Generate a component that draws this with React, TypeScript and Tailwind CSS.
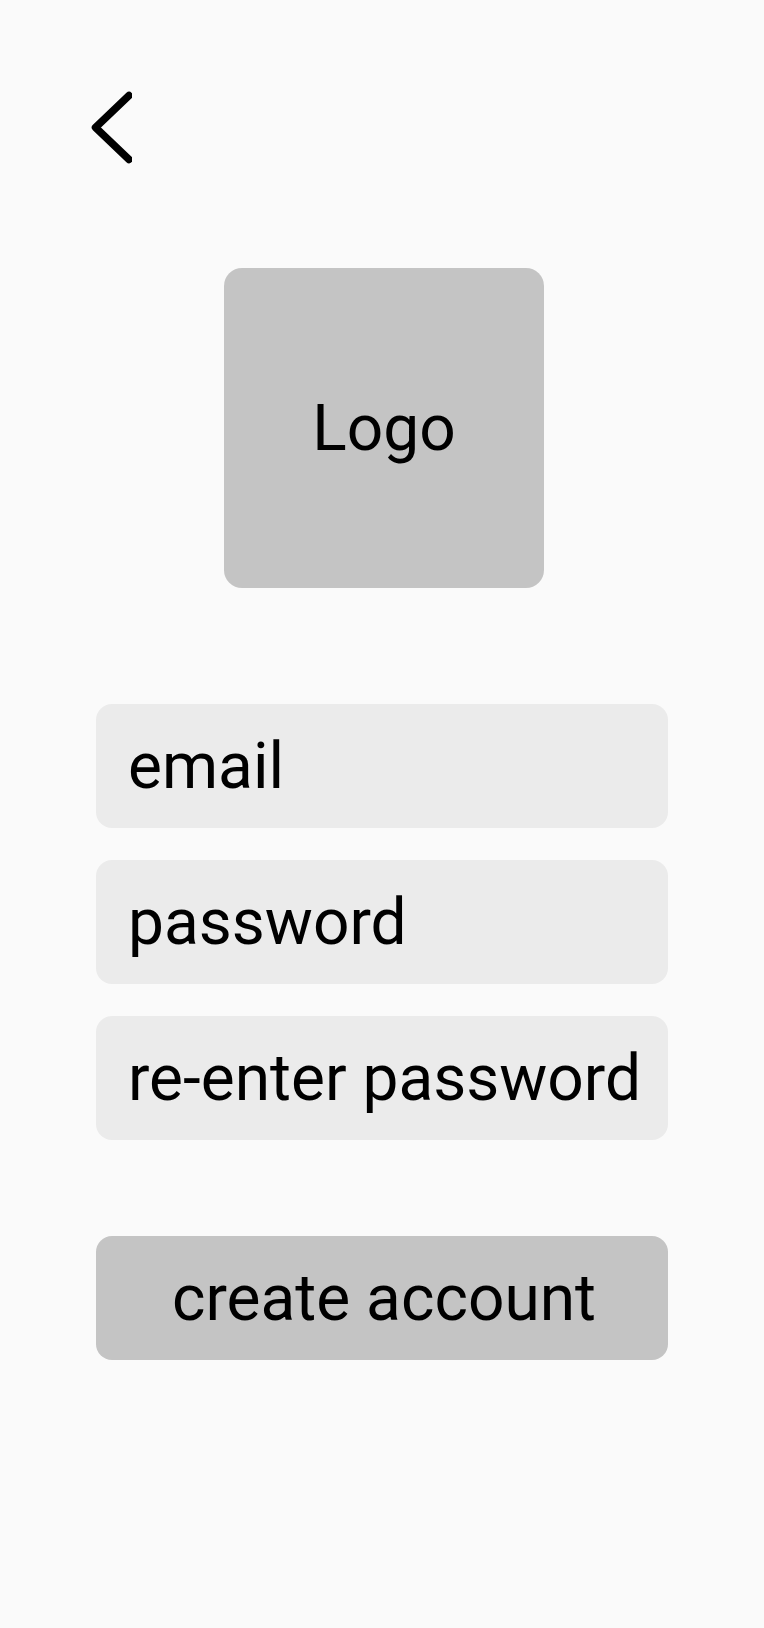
import React from "react";

export default function App() {
  const fields = ["email", "password", "re-enter password"];
  return (
    <div
      className="w-[764px] h-[1628px] bg-[#fafafa] text-black overflow-hidden"
      style={{ fontFamily: "Roboto, 'Liberation Sans', sans-serif" }}
    >
      <div className="pt-[88px] pl-[84px]">
        <svg width="48" height="80" viewBox="0 0 48 80" fill="none">
          <polyline
            points="45,7.5 11.5,39.5 45,71.5"
            stroke="#000"
            strokeWidth="7.5"
            strokeLinecap="round"
            strokeLinejoin="round"
          />
        </svg>
      </div>
      <div className="mt-[100px] ml-[224px] w-[320px] h-[320px] rounded-[18px] bg-[#c4c4c4] flex items-center justify-center">
        <span className="text-[64px] leading-[75px]">Logo</span>
      </div>
      <div className="mt-[116px] mx-[96px] flex flex-col gap-[32px]">
        {fields.map((f) => (
          <div
            key={f}
            className="h-[124px] rounded-[16px] bg-[#ebebeb] flex items-center pl-[32px] whitespace-nowrap"
          >
            <span className="text-[64px] leading-[75px]">{f}</span>
          </div>
        ))}
      </div>
      <div className="mt-[96px] mx-[96px] h-[124px] rounded-[16px] bg-[#c4c4c4] flex items-center justify-center pl-[4px]">
        <span className="text-[64px] leading-[75px]">create account</span>
      </div>
    </div>
  );
}
